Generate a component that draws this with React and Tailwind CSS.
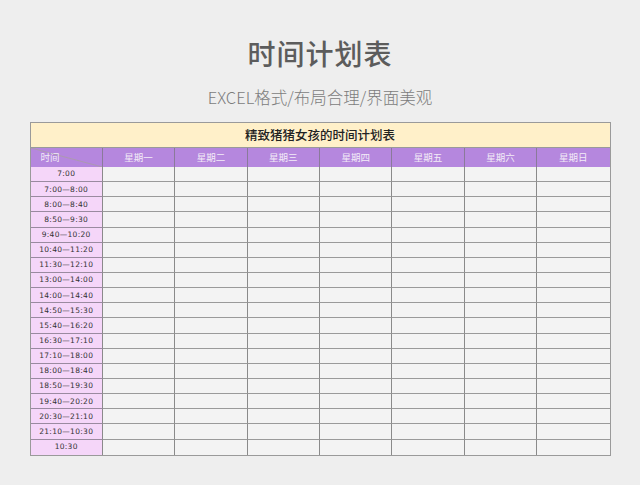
const days = ["星期一", "星期二", "星期三", "星期四", "星期五", "星期六", "星期日"];
const times = [
  "7:00",
  "7:00—8:00",
  "8:00—8:40",
  "8:50—9:30",
  "9:40—10:20",
  "10:40—11:20",
  "11:30—12:10",
  "13:00—14:00",
  "14:00—14:40",
  "14:50—15:30",
  "15:40—16:20",
  "16:30—17:10",
  "17:10—18:00",
  "18:00—18:40",
  "18:50—19:30",
  "19:40—20:20",
  "20:30—21:10",
  "21:10—10:30",
  "10:30",
];

export default function App() {
  return (
    <div
      className="w-[640px] h-[485px] bg-[#eeeeee] flex flex-col items-center overflow-hidden"
      style={{ fontFamily: '"Noto Sans CJK SC", "Liberation Sans", sans-serif' }}
    >
      <h1 className="mt-[34px] h-[38px] leading-[38px] text-[28px] font-medium text-[#5c5c5c] tracking-[1px]">
        时间计划表
      </h1>
      <p className="mt-[13px] h-[24px] leading-[24px] text-[16.5px] font-light text-[#7c7c7c]">
        EXCEL格式/布局合理/界面美观
      </p>

      <div className="mt-[13px] w-[581px] border border-[#9a9a9a]">
        <div className="h-[25px] bg-[#fff0c9] flex items-center justify-center text-[12.5px] font-medium text-[#222] border-b border-[#9a9a9a]">
          精致猪猪女孩的时间计划表
        </div>
        <div className="grid grid-cols-8">
          <div className="relative h-[19px] bg-[#b587de] border-r border-[#8a7a9a] overflow-hidden">
            <svg className="absolute inset-0" width="100%" height="100%" preserveAspectRatio="none" viewBox="0 0 72 19">
              <line x1="0" y1="0" x2="72" y2="19" stroke="#a99fa3" strokeWidth="0.8" />
            </svg>
            <span className="absolute left-[10px] top-[2px] text-[9.5px] leading-[14px] text-[#f3ecf7]">时间</span>
          </div>
          {days.map((d, i) => (
            <div
              key={d}
              className={
                "h-[19px] bg-[#b587de] flex items-center justify-center text-[9.5px] text-[#f3ecf7] " +
                (i < 6 ? "border-r border-[#8a7a9a]" : "")
              }
            >
              {d}
            </div>
          ))}
          {times.map((t, r) => (
            <Row key={r} t={t} last={r === times.length - 1} />
          ))}
        </div>
      </div>
    </div>
  );
}

function Row({ t, last }) {
  return (
    <>
      <div
        className={
          "h-[15.15px] bg-[#f5d6f9] flex items-center justify-center text-[7.5px] tracking-[0.3px] text-[#333] border-r border-[#8a8a8a] " +
          (last ? "" : "border-b border-b-[#9a8aa0]")
        }
        style={{ fontFamily: '"DejaVu Sans", sans-serif' }}
      >
        {t}
      </div>
      {days.map((d, i) => (
        <div
          key={d}
          className={
            "h-[15.15px] bg-[#f3f3f3] " +
            (i < 6 ? "border-r border-[#8a8a8a] " : "") +
            (last ? "" : "border-b border-b-[#9a9a9a]")
          }
        />
      ))}
    </>
  );
}
